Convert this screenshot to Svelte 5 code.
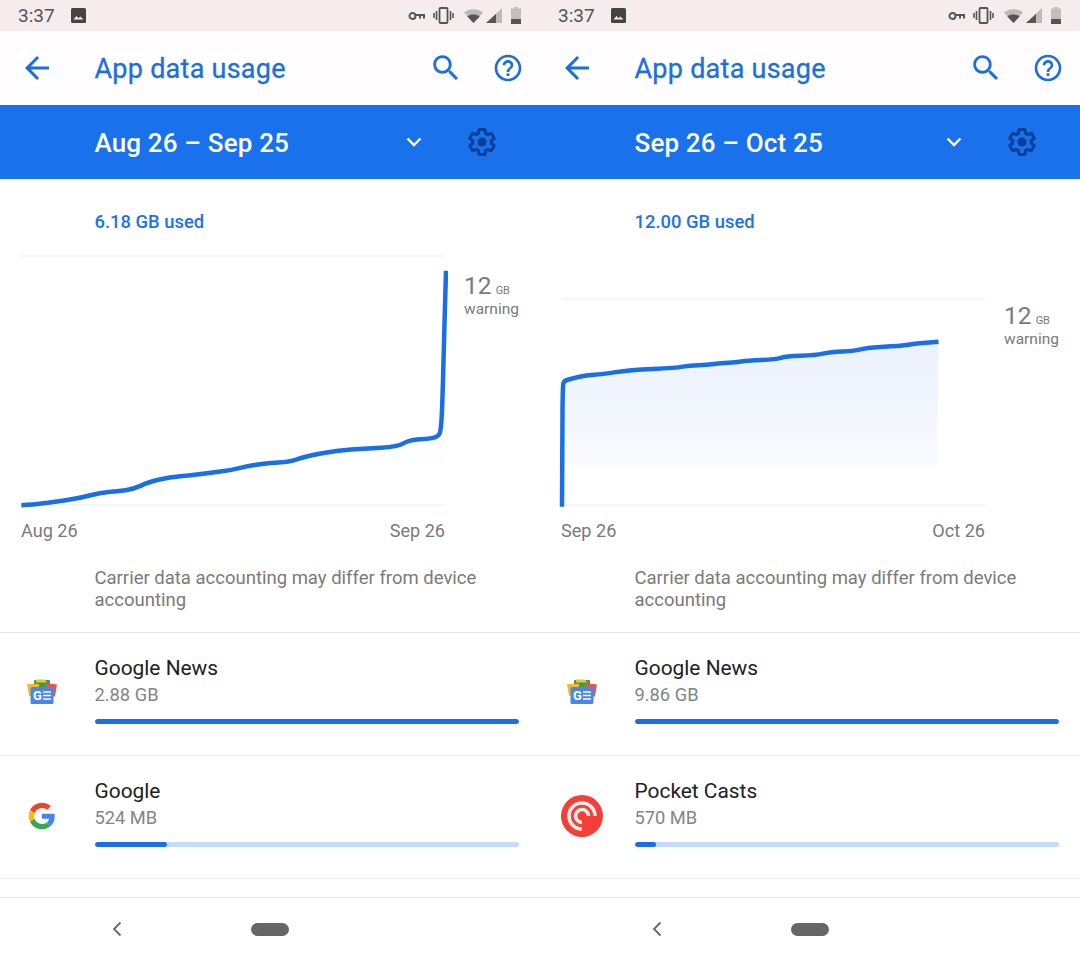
<script>
  const smooth = (p) => {
    let d = `M${p[0][0]} ${p[0][1]}`;
    for (let i = 1; i < p.length - 1; i++) {
      const mx = (p[i][0] + p[i + 1][0]) / 2;
      const my = (p[i][1] + p[i + 1][1]) / 2;
      d += ` Q${p[i][0]} ${p[i][1]} ${mx} ${my}`;
    }
    const l = p[p.length - 1];
    return d + ` L${l[0]} ${l[1]}`;
  };

  const left = [[21.3,505.3],[34.4,504.6],[48,502.6],[62,500.9],[81,497.7],[100,492.7],[117,491.3],[134,489],[148,482.3],[169,477.3],[196,474.7],[210,472.7],[230.5,470.3],[248,466],[268,463],[289,462],[304.5,456.7],[337,450.3],[365,448.7],[397.5,446.7],[409.5,440],[430,438.7],[438,436.5],[441,431],[442.5,400],[444,340],[446,270.7]];
  const right = [[22,506.7],[22.3,440],[22.7,386],[24,381],[30,379],[46.5,375],[62,374.3],[89.5,370],[136,368],[149.7,365.3],[167,365],[180.7,363],[196,362.3],[206.5,360.7],[235.7,359.3],[246,356.3],[275.3,355.3],[290.8,352],[315,351],[328.6,347.3],[359.6,346],[373.4,344],[398.5,341.7]];

  const phones = [
    { id: 'a', range: 'Aug 26 – Sep 25', used: '6.18 GB used', top: 256, labelTop: 22, pts: left, fillTop: 0.3, from: 'Aug 26', to: 'Sep 26',
      apps: [{ name: 'Google News', size: '2.88 GB', pct: 100, icon: 'news' }, { name: 'Google', size: '524 MB', pct: 17, icon: 'google' }] },
    { id: 'b', range: 'Sep 26 – Oct 25', used: '12.00 GB used', top: 299, labelTop: 52, pts: right, fillTop: 1, from: 'Sep 26', to: 'Oct 26',
      apps: [{ name: 'Google News', size: '9.86 GB', pct: 100, icon: 'news' }, { name: 'Pocket Casts', size: '570 MB', pct: 5, icon: 'pocket' }] }
  ];

  const area = (p) => `${smooth(p)} L${p[p.length - 1][0] - 1} 476 L${p[0][0]} 476 Z`;
</script>

{#snippet newsIcon()}
  <svg class="appicon" viewBox="0 0 42 42">
    <rect x="13" y="8" width="16" height="10" rx="1" fill="#2f9e57"/>
    <path d="M15 7.500h9l2 3H15z" fill="#e8c43a"/>
    <path d="M6 12h12v12H8z" fill="#f5b92e"/>
    <path d="M24 11l12 1.500-2 12H24z" fill="#e2574c"/>
    <rect x="9.500" y="15" width="23" height="17" rx="1.500" fill="#4a86e8"/>
    <text x="12" y="28" class="gtext">G</text>
    <path d="M22 20h8M22 23.500h8M22 27h8" stroke="#fff" stroke-width="1.700"/>
  </svg>
{/snippet}

{#snippet googleIcon()}
  <svg class="appicon" viewBox="-14 -14 76 76">
    <path fill="#EA4335" d="M24 9.500c3.540 0 6.710 1.220 9.210 3.600l6.850-6.850C35.900 2.380 30.470 0 24 0 14.620 0 6.510 5.380 2.560 13.220l7.980 6.190C12.430 13.720 17.740 9.500 24 9.500z"/>
    <path fill="#4285F4" d="M46.980 24.550c0-1.570-.15-3.090-.38-4.550H24v9.020h12.940c-.58 2.960-2.260 5.480-4.780 7.180l7.730 6c4.510-4.180 7.090-10.360 7.090-17.650z"/>
    <path fill="#FBBC05" d="M10.530 28.590c-.5-1.450-.78-2.990-.78-4.590s.27-3.140.78-4.590l-7.980-6.190C.92 16.460 0 20.120 0 24c0 3.880.92 7.540 2.560 10.780l7.970-6.190z"/>
    <path fill="#34A853" d="M24 48c6.480 0 11.930-2.130 15.890-5.810l-7.730-6c-2.150 1.450-4.920 2.300-8.160 2.300-6.260 0-11.570-4.220-13.470-9.910l-7.980 6.190C6.510 42.620 14.620 48 24 48z"/>
  </svg>
{/snippet}

{#snippet pocketIcon()}
  <svg class="appicon" viewBox="0 0 42 42">
    <circle cx="21" cy="21" r="21" fill="#f43e37"/>
    <path d="M21 34A13 13 0 1 1 34 21" fill="none" stroke="#fdeeea" stroke-width="3.600"/>
    <path d="M21 27.500A6.500 6.500 0 1 1 27.500 21" fill="none" stroke="#fdeeea" stroke-width="3.600"/>
  </svg>
{/snippet}

<div class="screen">
  {#each phones as ph (ph.id)}
    <section class="phone">
      <header class="status">
        <span class="clock">3:37</span>
        <svg class="photo" viewBox="0 0 15 15"><rect width="15" height="15" rx="1.500" fill="#444"/><path d="M2.500 11.500l3-3.500 2 2.300 1.800-1.800 3.200 3z" fill="#f4ecee"/></svg>
        <span class="spacer"></span>
        <svg class="st key" viewBox="0 0 16 10"><circle cx="4" cy="5" r="3" fill="none" stroke="#555" stroke-width="1.900"/><path d="M7 4h8.500V7.500M11.500 4v3.500" fill="none" stroke="#555" stroke-width="2"/></svg>
        <svg class="st vib" viewBox="0 0 21 17"><rect x="6.500" y="1" width="8" height="15" rx="1" fill="none" stroke="#555" stroke-width="1.800"/><path d="M3.500 4v9M17.500 4v9M1 6v5M20 6v5" stroke="#555" stroke-width="1.600"/></svg>
        <svg class="st wifi" viewBox="0 0 19 14"><path d="M0 3.500C5 -1 14 -1 19 3.500L9.500 14z" fill="#bdb8ba"/><path d="M3.300 7.400C6.500 5 12.500 5 15.700 7.400L9.500 14z" fill="#555"/></svg>
        <svg class="st sig" viewBox="0 0 16 15"><path d="M16 0V15H0z" fill="#bdb8ba"/><path d="M10 6V15H0z" fill="#555"/></svg>
        <svg class="st bat" viewBox="0 0 10 17"><path d="M3 0h4v1.500h3V17H0V1.500h3z" fill="#c2bdbf"/><rect y="12" width="10" height="5" fill="#555"/></svg>
      </header>

      <div class="appbar">
        <svg class="back" viewBox="0 0 24 24"><path d="M20 11H7.830l5.590-5.590L12 4l-8 8 8 8 1.410-1.410L7.830 13H20v-2z"/></svg>
        <h1>App data usage</h1>
        <svg class="search" viewBox="0 0 24 24"><path d="M15.500 14h-.79l-.28-.27C15.410 12.590 16 11.110 16 9.500 16 5.910 13.090 3 9.500 3S3 5.910 3 9.500 5.910 16 9.500 16c1.610 0 3.090-.59 4.230-1.570l.27.28v.79l5 4.990L20.490 19l-4.990-5zm-6 0C7.010 14 5 11.990 5 9.500S7.010 5 9.500 5 14 7.010 14 9.500 11.990 14 9.500 14z"/></svg>
        <svg class="help" viewBox="0 0 24 24"><path d="M11 18h2v-2h-2v2zm1-16C6.480 2 2 6.480 2 12s4.480 10 10 10 10-4.480 10-10S17.520 2 12 2zm0 18c-4.410 0-8-3.590-8-8s3.590-8 8-8 8 3.590 8 8-3.590 8-8 8zm0-14c-2.210 0-4 1.790-4 4h2c0-1.100.9-2 2-2s2 .9 2 2c0 2-3 1.750-3 5h2c0-2.250 3-2.500 3-5 0-2.210-1.790-4-4-4z"/></svg>
      </div>

      <div class="band">
        <span class="range">{ph.range}</span>
        <svg class="chev" viewBox="0 0 16 10"><path d="M1.500 1.500L8 8l6.500-6.500" fill="none" stroke="#fff" stroke-width="2.400"/></svg>
        <svg class="gear" viewBox="0 0 24 24">
          <path fill="none" stroke="#0a3f98" stroke-width="2.400" d="M19.430 12.980c.04-.32.07-.64.07-.98s-.03-.66-.07-.98l2.110-1.650c.19-.15.24-.42.12-.64l-2-3.460c-.12-.22-.39-.3-.61-.22l-2.490 1c-.52-.4-1.080-.73-1.690-.98l-.38-2.650C14.460 2.180 14.250 2 14 2h-4c-.25 0-.46.18-.49.42l-.38 2.650c-.61.25-1.170.59-1.690.98l-2.490-1c-.23-.09-.49 0-.61.22l-2 3.460c-.13.22-.07.49.12.64l2.110 1.650c-.04.32-.07.65-.07.98s.03.66.07.98l-2.110 1.650c-.19.15-.24.42-.12.64l2 3.460c.12.22.39.3.61.22l2.490-1c.52.4 1.080.73 1.690.98l.38 2.650c.03.24.24.42.49.42h4c.25 0 .46-.18.49-.42l.38-2.650c.61-.25 1.170-.59 1.690-.98l2.490 1c.23.09.49 0 .61-.22l2-3.460c.12-.22.07-.49-.12-.64l-2.110-1.650z"/>
          <circle cx="12" cy="12" r="3.600" fill="#0a3f98"/>
        </svg>
      </div>

      <p class="used">{ph.used}</p>

      <div class="chartrow">
        <svg class="chart" viewBox="18 250 430 262">
          <defs>
            <linearGradient id={`fill-${ph.id}`} gradientUnits="userSpaceOnUse" x1="0" y1="345" x2="0" y2="476">
              <stop offset="0" stop-color="#ebf2fd" stop-opacity={ph.fillTop}/>
              <stop offset="0.88" stop-color="#f8fafe" stop-opacity={ph.fillTop}/>
              <stop offset="1" stop-color="#ffffff" stop-opacity="0"/>
            </linearGradient>
          </defs>
          <path d={`M21 ${ph.top}H445`} class="grid"/>
          <path d="M21 505H445" class="grid"/>
          <path d={area(ph.pts)} fill={`url(#fill-${ph.id})`}/>
          <path d={smooth(ph.pts)} class="line"/>
        </svg>
        <div class="limit" style={`margin-top:${ph.labelTop}px`}>
          <div class="limitval">12 <small>GB</small></div>
          <div class="limitname">warning</div>
        </div>
      </div>

      <div class="axis"><span>{ph.from}</span><span>{ph.to}</span></div>
      <p class="note">Carrier data accounting may differ from device accounting</p>

      <ul class="apps">
        {#each ph.apps as app (app.name)}
          <li class="app">
            <div class="iconbox">
              {#if app.icon === 'news'}{@render newsIcon()}{:else if app.icon === 'google'}{@render googleIcon()}{:else}{@render pocketIcon()}{/if}
            </div>
            <div class="info">
              <div class="name">{app.name}</div>
              <div class="size">{app.size}</div>
              <div class="track"><div class="bar" style={`width:${app.pct}%`}></div></div>
            </div>
          </li>
        {/each}
      </ul>

      <div class="filler"></div>
      <nav class="nav">
        <svg class="navback" viewBox="0 0 10 16"><path d="M8.500 1.500L2 8l6.500 6.500" fill="none" stroke="#666" stroke-width="1.800"/></svg>
        <span class="pill"></span>
      </nav>
    </section>
  {/each}
</div>

<style>
  :global(body) { margin: 0; background: #fff; }
  .screen { display: flex; width: 1080px; height: 960px; font-family: Roboto, "Liberation Sans", sans-serif; overflow: hidden; }
  .phone { width: 540px; height: 960px; display: flex; flex-direction: column; background: #fff; }
  .status { height: 31px; background: #f6ecee; display: flex; align-items: center; box-sizing: border-box; padding: 0 19px 0 18px; }
  .clock { font-size: 19px; line-height: 33px; color: #555; width: 53px; }
  .photo { width: 15px; height: 15px; }
  .spacer { flex: 1; }
  .st { display: block; }
  .key { width: 17px; height: 10px; margin-right: 8px; }
  .vib { width: 21px; height: 17px; margin-right: 10px; }
  .wifi { width: 19px; height: 14px; margin-right: 3px; }
  .sig { width: 16px; height: 15px; margin-right: 9px; }
  .bat { width: 10px; height: 17px; }

  .appbar { height: 74px; background: #fffdfe; display: flex; align-items: center; box-sizing: border-box; padding-left: 19px; }
  .appbar svg { fill: #1a6fdf; display: block; }
  .back { width: 36px; height: 36px; margin-right: 39.500px; }
  h1 { margin: 2px 0 0; font-size: 27px; font-weight: 400; color: #1a6fdf; flex: 1; letter-spacing: 0.25px; -webkit-text-stroke: 0.3px #1a6fdf; }
  .search { width: 34px; height: 34px; margin-right: 29px; }
  .help { width: 32px; height: 32px; margin-right: 16px; }

  .band { height: 74px; background: #1a71ec; display: flex; align-items: center; box-sizing: border-box; padding-left: 94.500px; }
  .range { font-size: 26px; line-height: 32px; padding-top: 1px; font-weight: 500; color: #fff; width: 311px; letter-spacing: 0.15px; }
  .chev { width: 16px; height: 10px; margin-right: 45px; }
  .gear { width: 30px; height: 30px; }

  .used { margin: 33px 0 18px 94.500px; font-size: 18.400px; line-height: 20px; font-weight: 500; color: #1a73e8; }
  .chartrow { display: flex; align-items: flex-start; height: 262px; padding-left: 18px; }
  .chart { width: 430px; height: 262px; display: block; flex: none; }
  .grid { stroke: #ececec; stroke-width: 1; fill: none; }
  .line { fill: none; stroke: #1a6fe6; stroke-width: 4.500; stroke-linejoin: round; }
  .limit { margin-left: 16px; color: #7a7a7a; }
  .limitval { font-size: 24.500px; line-height: 28px; }
  .limitval small { font-size: 11px; margin-left: -2px; }
  .limitname { font-size: 15.500px; line-height: 20px; margin-top: -6px; }

  .axis { display: flex; justify-content: space-between; margin: 8px 95px 0 21px; font-size: 18.100px; line-height: 22px; color: #7a7a7a; }
  .note { margin: 25px 50px 21px 94.500px; font-size: 18.500px; line-height: 22px; color: #7a7a7a; }

  .apps { list-style: none; margin: 0; padding: 0; border-top: 1px solid #e2e2e2; }
  .app { display: flex; height: 122px; border-bottom: 1px solid #eeeeee; padding-right: 21px; }
  .iconbox { width: 95px; flex: none; padding: 39px 0 0 21px; box-sizing: border-box; }
  .appicon { width: 42px; height: 42px; display: block; }
  .gtext { font: 700 13px Roboto, sans-serif; fill: #fff; }
  .info { flex: 1; padding-top: 23px; }
  .name { font-size: 20.900px; line-height: 24px; color: #202124; margin-left: -0.500px; }
  .size { font-size: 18.300px; line-height: 24px; margin-top: 3px; color: #80868b; margin-left: -0.500px; }
  .track { height: 5px; border-radius: 3px; background: #c6dafc; margin-top: 12px; overflow: hidden; }
  .bar { height: 100%; background: #1a6fe6; border-radius: 3px; }

  .filler { flex: 1; }
  .nav { height: 62px; border-top: 1px solid #e6e6e6; display: flex; align-items: center; padding-left: 112px; }
  .navback { width: 10px; height: 16px; margin-right: 129px; }
  .pill { width: 38px; height: 13px; border-radius: 7px; background: #666; }
</style>
